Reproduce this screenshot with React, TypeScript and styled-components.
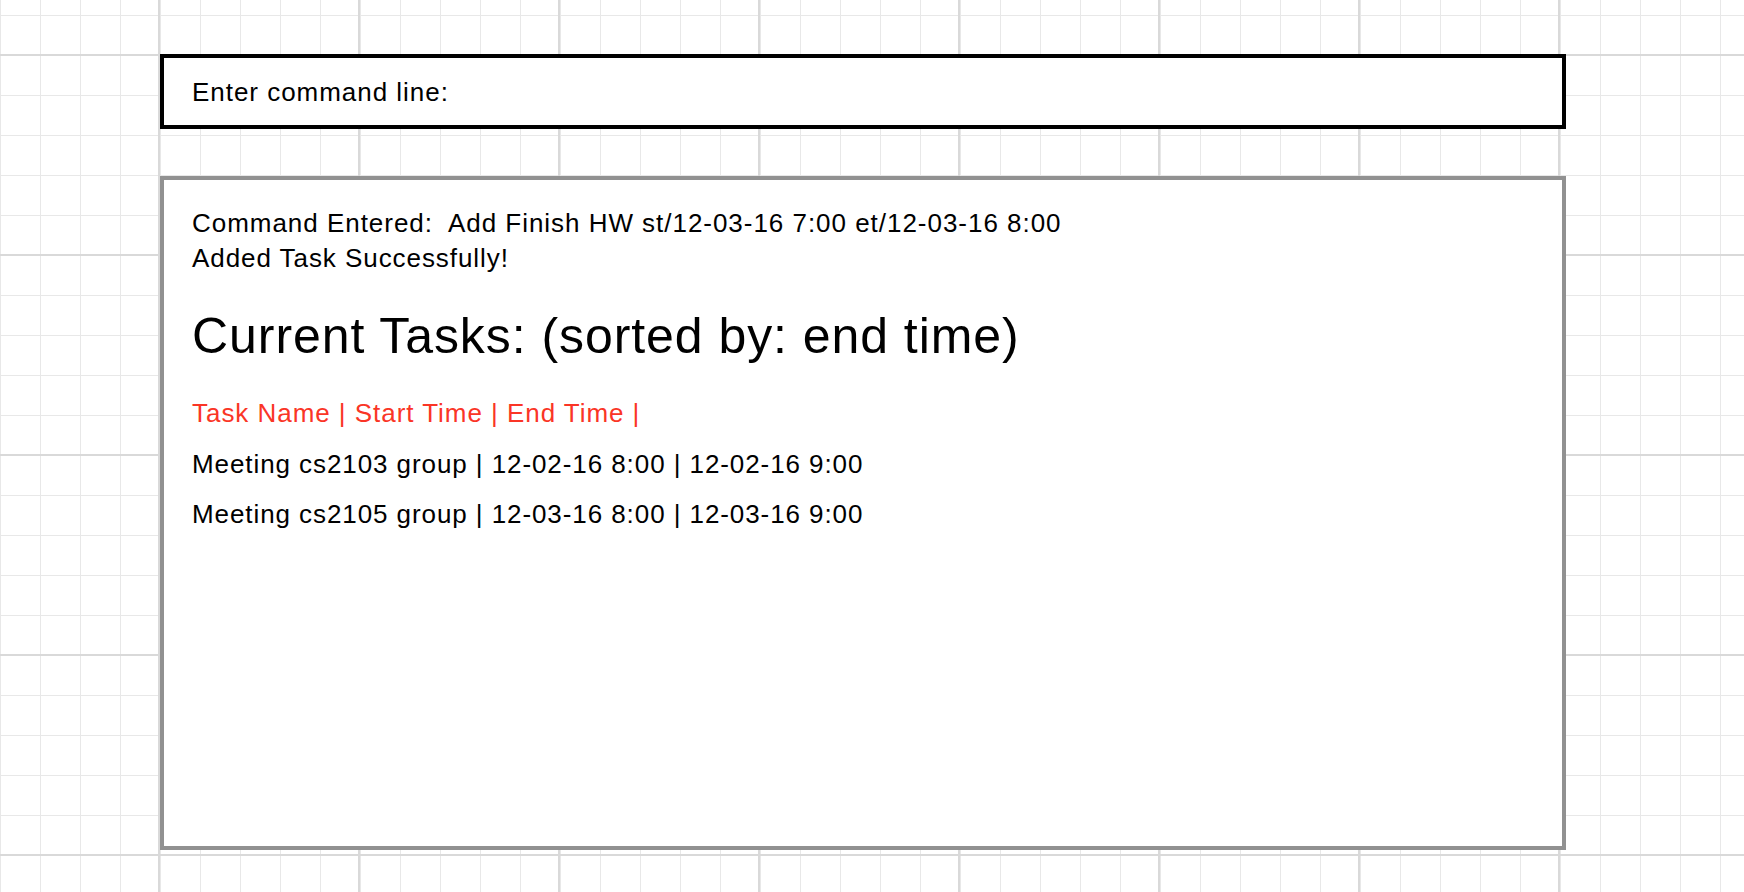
import React from "react";
import styled, { createGlobalStyle } from "styled-components";

const GlobalStyle = createGlobalStyle`
  html, body {
    margin: 0;
    padding: 0;
  }
  body {
    font-family: "Liberation Sans", Arial, Helvetica, sans-serif;
    color: #000;
    background-color: #ffffff;
    background-image:
      linear-gradient(to right, #d9d9d9 2px, transparent 2px),
      linear-gradient(to bottom, #d9d9d9 2px, transparent 2px),
      linear-gradient(to right, #e8e8e8 1px, transparent 1px),
      linear-gradient(to bottom, #e8e8e8 1px, transparent 1px);
    background-size: 200px 100%, 100% 200px, 40px 100%, 100% 40px;
    background-position: 158px 0, 0 54px, 0 0, 0 15px;
  }
  #root {
    min-height: 100vh;
  }
`;

const Page = styled.main`
  display: flex;
  flex-direction: column;
  gap: 47px;
  width: 1406px;
  padding: 54px 0 0 160px;
`;

const CommandBar = styled.div`
  box-sizing: border-box;
  height: 75px;
  border: 4px solid #000;
  background: #fff;
  display: flex;
  align-items: center;
  padding: 1px 0 0 28px;
  font-size: 26px;
  letter-spacing: 0.97px;
`;

const OutputPanel = styled.section`
  box-sizing: border-box;
  height: 674px;
  border: 4px solid #919191;
  background: #fff;
  padding: 26px 28px 0 28px;
  display: flex;
  flex-direction: column;
`;

const Message = styled.p<{ $spacing: number }>`
  margin: 0;
  font-size: 26px;
  line-height: 35px;
  letter-spacing: ${(p) => p.$spacing}px;
  white-space: pre;
`;

const Heading = styled.h1`
  margin: 35px 0 0 0;
  font-size: 50px;
  line-height: 50px;
  font-weight: 400;
  letter-spacing: 0.94px;
`;

const TaskTable = styled.div`
  margin-top: 39px;
  display: flex;
  flex-direction: column;
  gap: 24.5px;
`;

const TaskLine = styled.div<{ $header?: boolean }>`
  font-size: 26px;
  line-height: 26px;
  letter-spacing: ${(p) => (p.$header ? "0.96px" : "0.92px")};
  white-space: pre;
  color: ${(p) => (p.$header ? "#fa3526" : "#000")};
`;

const tasks = [
  { name: "Meeting cs2103 group", start: "12-02-16 8:00", end: "12-02-16 9:00" },
  { name: "Meeting cs2105 group", start: "12-03-16 8:00", end: "12-03-16 9:00" },
];

export default function App() {
  return (
    <>
      <GlobalStyle />
      <Page>
        <CommandBar>Enter command line:</CommandBar>
        <OutputPanel>
          <Message $spacing={0.97}>Command Entered:  Add Finish HW st/12-03-16 7:00 et/12-03-16 8:00</Message>
          <Message $spacing={0.94}>Added Task Successfully!</Message>
          <Heading>Current Tasks: (sorted by: end time)</Heading>
          <TaskTable>
            <TaskLine $header>Task Name | Start Time | End Time |</TaskLine>
            {tasks.map((t) => (
              <TaskLine key={t.name}>
                {t.name} | {t.start} | {t.end}
              </TaskLine>
            ))}
          </TaskTable>
        </OutputPanel>
      </Page>
    </>
  );
}
